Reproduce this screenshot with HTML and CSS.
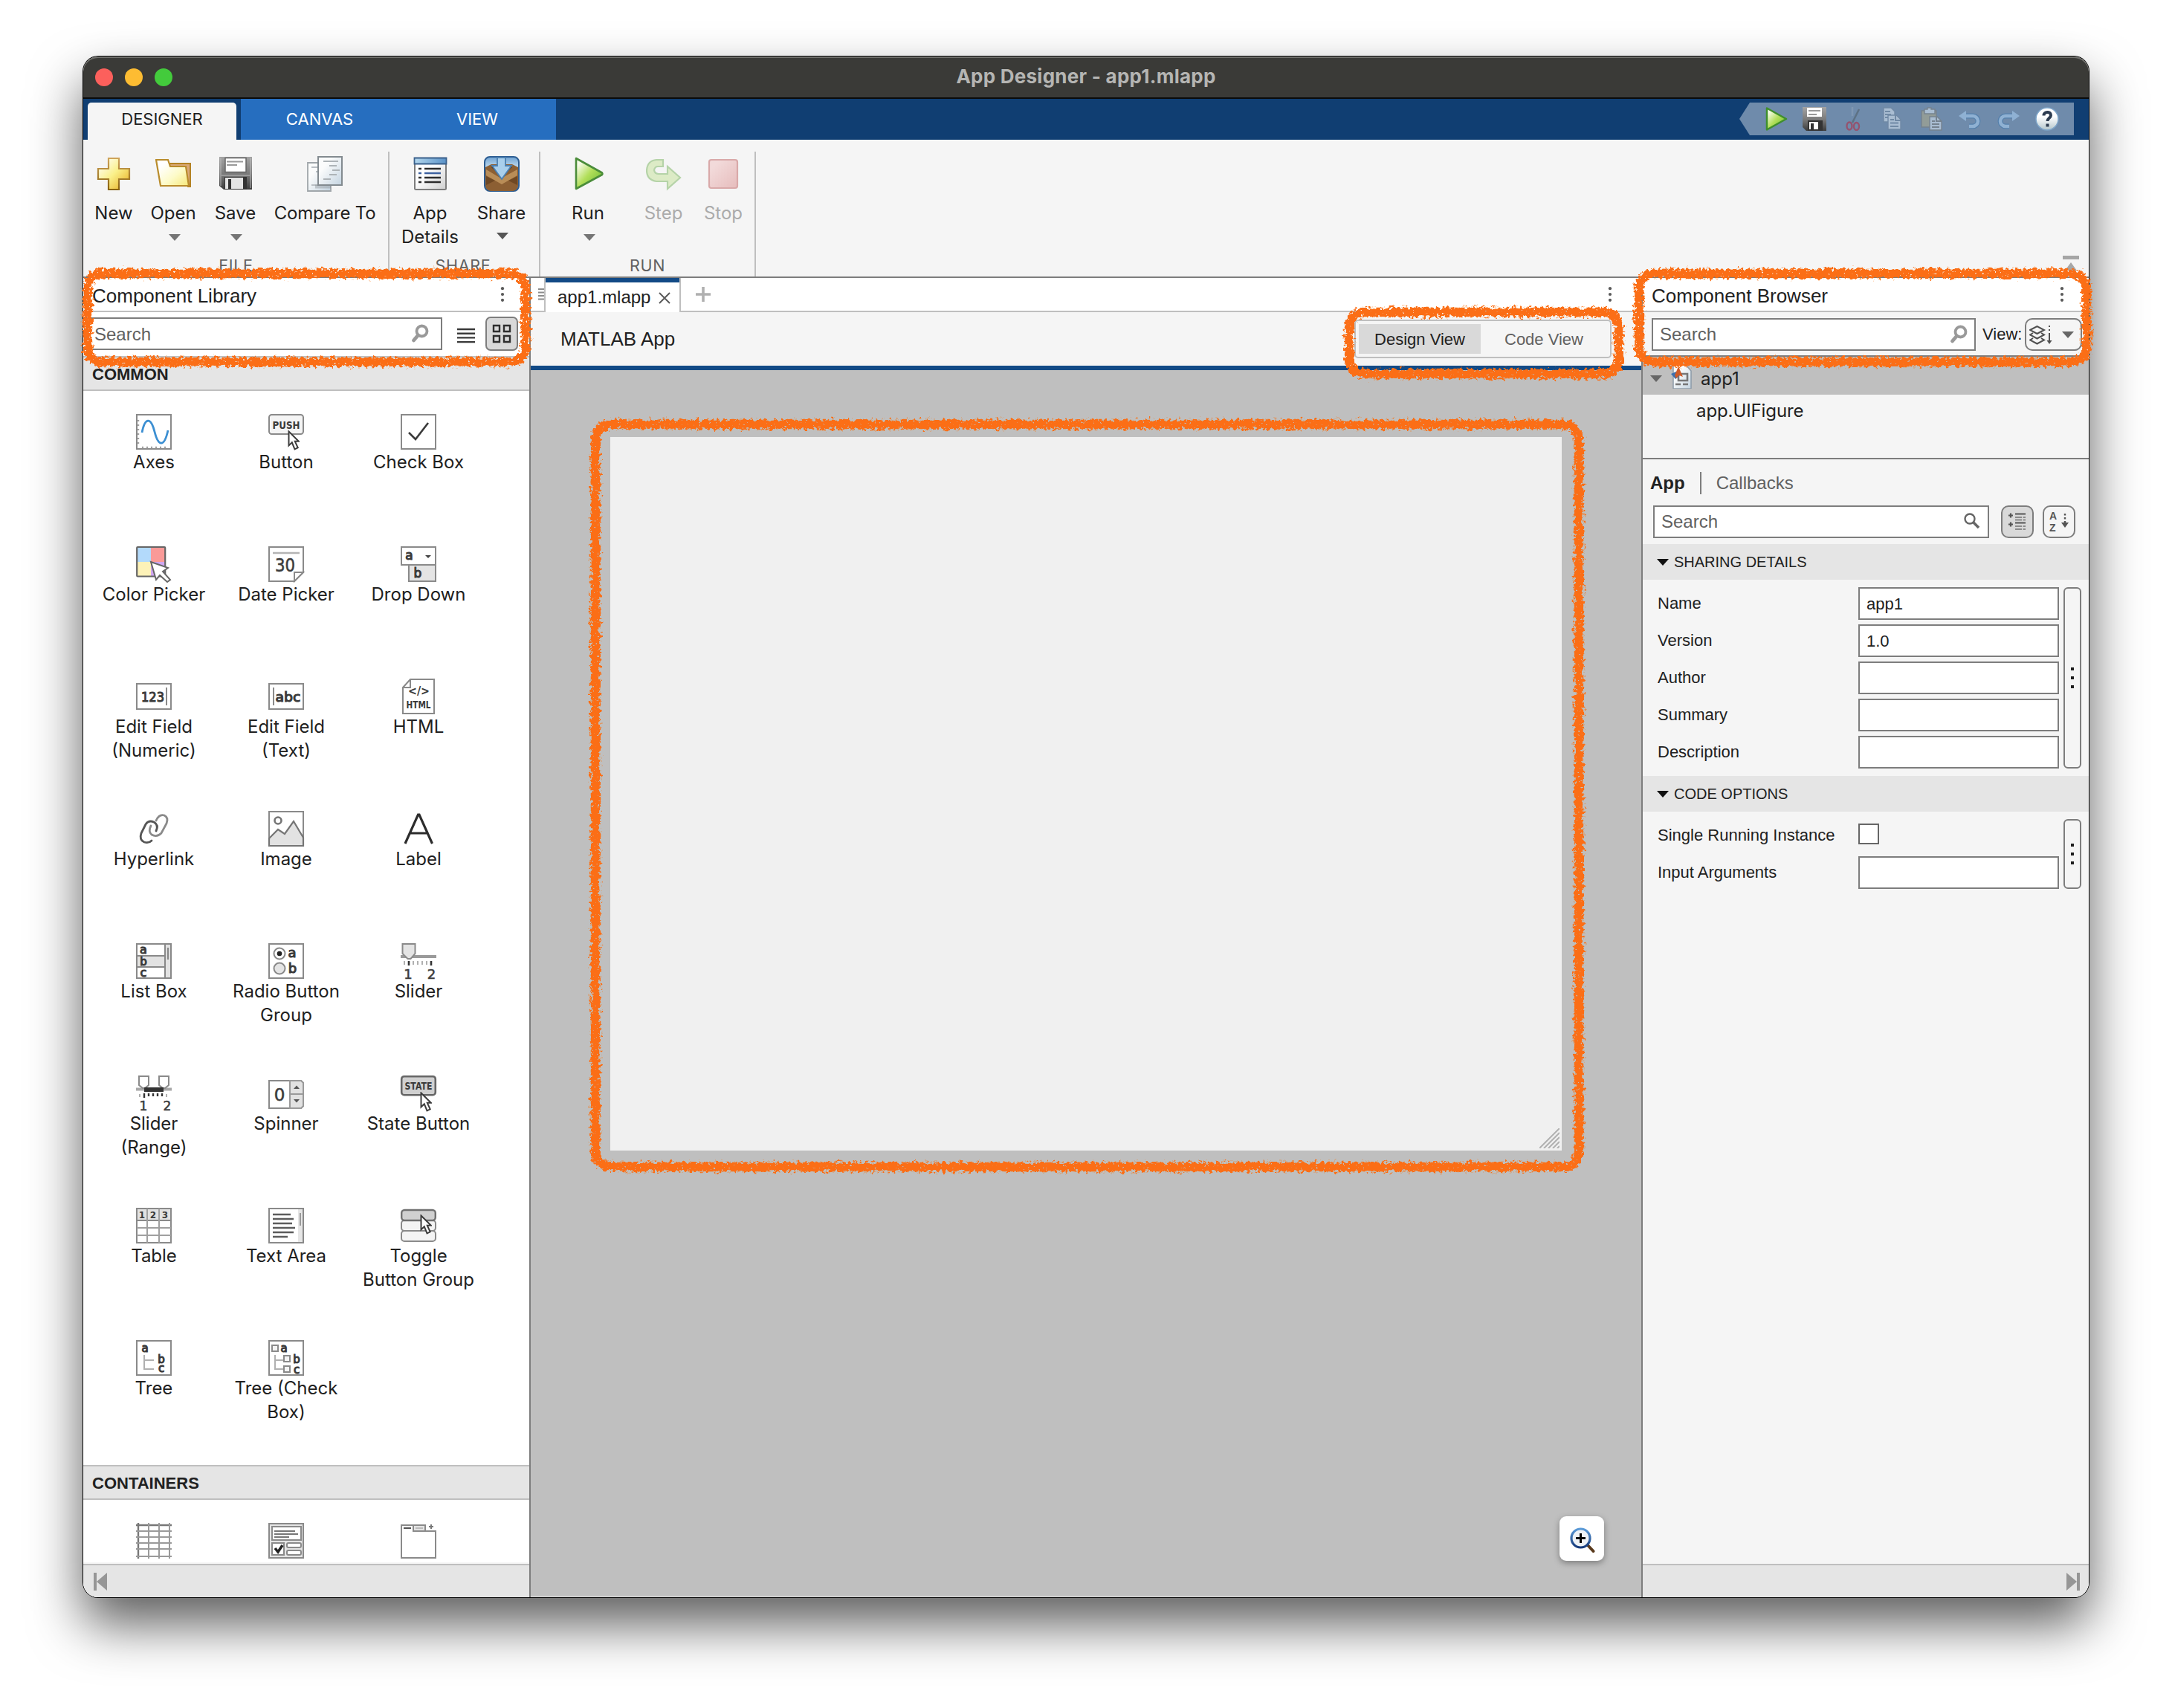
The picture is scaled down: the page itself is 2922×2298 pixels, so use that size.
FILE: index.html
```html
<!DOCTYPE html>
<html lang="en">
<head>
<meta charset="utf-8">
<title>App Designer - app1.mlapp</title>
<link rel="stylesheet" href="styles.css">
</head>
<body>
<svg class="defs" width="0" height="0" aria-hidden="true">
  <defs>
    <linearGradient id="gold" x1="0" y1="0" x2="1" y2="1"><stop offset=".1" stop-color="#fffef2"/><stop offset=".5" stop-color="#faf08a"/><stop offset="1" stop-color="#e6a817"/></linearGradient>
    <linearGradient id="goldEdge" x1="0" y1="0" x2="0" y2="1"><stop offset="0" stop-color="#cfa45a"/><stop offset="1" stop-color="#8a6410"/></linearGradient>
    <linearGradient id="folder" x1="0" y1="0" x2="1" y2="1"><stop offset=".2" stop-color="#fff"/><stop offset=".6" stop-color="#fdfbc8"/><stop offset="1" stop-color="#f6e878"/></linearGradient>
    <linearGradient id="steel" x1="0" y1="0" x2="0" y2="1"><stop offset="0" stop-color="#a4a4a4"/><stop offset=".5" stop-color="#7c7c7c"/><stop offset="1" stop-color="#3c3c3c"/></linearGradient>
    <linearGradient id="paper" x1="0" y1="0" x2="1" y2="1"><stop offset=".3" stop-color="#fbfcfc"/><stop offset="1" stop-color="#c3d3e0"/></linearGradient>
    <linearGradient id="sheet" x1="0" y1="0" x2="1" y2="1"><stop offset=".4" stop-color="#fff"/><stop offset="1" stop-color="#cfcfcf"/></linearGradient>
    <linearGradient id="bluebar" x1="0" y1="0" x2="1" y2="0"><stop offset="0" stop-color="#b4d8ee"/><stop offset="1" stop-color="#5a92c8"/></linearGradient>
    <linearGradient id="green" x1="0" y1="0" x2="1" y2="1"><stop offset=".15" stop-color="#f6fbe8"/><stop offset=".5" stop-color="#b2df5a"/><stop offset="1" stop-color="#5fb52a"/></linearGradient>
    <linearGradient id="sky" x1="0" y1="0" x2="0" y2="1"><stop offset="0" stop-color="#6ea2d2"/><stop offset=".4" stop-color="#d8ebf7"/><stop offset="1" stop-color="#3f78b4"/></linearGradient>
    <linearGradient id="pink" x1="0" y1="0" x2="1" y2="1"><stop offset=".2" stop-color="#f2dada"/><stop offset="1" stop-color="#e6bcbc"/></linearGradient>
    <linearGradient id="ball" x1="0" y1="0" x2="0" y2="1"><stop offset=".4" stop-color="#fff"/><stop offset="1" stop-color="#b4c6cc"/></linearGradient>
    <linearGradient id="lens" x1="0" y1="0" x2="0" y2="1"><stop offset="0" stop-color="#5b9bd8"/><stop offset="1" stop-color="#15397a"/></linearGradient>
    <filter id="chalk" filterUnits="userSpaceOnUse" x="90" y="340" width="2750" height="1260">
      <feTurbulence type="fractalNoise" baseFrequency=".22" numOctaves="3" seed="4" result="grain"/>
      <feDisplacementMap in="SourceGraphic" in2="grain" scale="12" xChannelSelector="R" yChannelSelector="G" result="rough"/>
      <feTurbulence type="fractalNoise" baseFrequency=".3 .34" numOctaves="2" seed="11"/>
      <feColorMatrix values="0 0 0 0 0  0 0 0 0 0  0 0 0 0 0  0 10 0 0 -2" result="holes"/>
      <feComposite in="rough" in2="holes" operator="in"/>
    </filter>
    <symbol id="cursor" viewBox="0 0 16 27"><path d="M1.5 1.5v19l4.3-4.2 3.7 9 4.2-2-3.9-8.5h5z" fill="#fff" stroke="#3c3c3c" stroke-width="2"/></symbol>
    <symbol id="kebab" viewBox="0 0 6 20"><circle cx="3" cy="2.2" r="2.1"/><circle cx="3" cy="10" r="2.1"/><circle cx="3" cy="17.8" r="2.1"/></symbol>
    <symbol id="loupe" viewBox="0 0 26 26"><circle cx="15.5" cy="9.5" r="7" fill="#fff" stroke="#999" stroke-width="3.800"/><path d="M10 15.500 4.500 22" stroke="#999" stroke-width="4.800" stroke-linecap="round"/></symbol>
  </defs>
</svg>

<div class="window">
  <header class="titlebar">
    <div class="lights"><i class="red"></i><i class="amber"></i><i class="lime"></i></div>
    <h1>App Designer - app1.mlapp</h1>
  </header>

  <nav class="tabstrip">
    <div class="tab selected">DESIGNER</div>
    <div class="tabgroup"><div class="tab">CANVAS</div><div class="tab">VIEW</div></div>
    <div class="quickbar">
      <svg class="q1" viewBox="0 0 32 32"><path d="M4 1.500 30 16 4 30.500z" fill="url(#green)" stroke="#3f8f2c" stroke-width="2.500" stroke-linejoin="round"/></svg>
      <svg class="q2" viewBox="0 0 32 32"><path d="M0 0h32v32H5l-5-5z" fill="url(#steel)"/><path d="M6 1h20v12H6z" fill="#fff"/><path d="M8 5h16M8 10h11" stroke="#999" stroke-width="2"/><path d="M7 18h20v14H7z" fill="#333"/><path d="M9 20h12v10H9z" fill="#fff"/><path d="M11 22h4v9h-4z" fill="#333"/></svg>
      <svg class="q3" viewBox="0 0 32 32" fill="none"><path d="M15 21 24 3" stroke="#5d7184" stroke-width="2.500"/><path d="M15 0v12" stroke="#7f97b2" stroke-width="2.500"/><ellipse cx="11" cy="25.500" rx="3.500" ry="5" stroke="#94536f" stroke-width="2.400"/><ellipse cx="20.500" cy="26" rx="3.500" ry="5" stroke="#94536f" stroke-width="2.400"/></svg>
      <svg class="q4" viewBox="0 0 32 32" fill="#a9bdd2" stroke="#7089a5" stroke-width="1.400"><path d="M5 1h10l5 5v14H5z"/><path d="M7 6h7M7 10h8M7 14h5" stroke-width="2"/><path d="M11 11h11l6 6v13H11z"/><path d="M21 11v7h7M14 17h5M14 21.500h11M14 26h11" stroke-width="2"/></svg>
      <svg class="q5" viewBox="0 0 32 32" stroke="#75828f" stroke-width="1.400"><path d="M3 5h20v22H3z" fill="#929c98"/><path d="M7 3h4V1h5v2h5v6H7z" fill="#a9bdd2"/><path d="M14 13h10l6 6v12H14z" fill="#a9bdd2"/><path d="M23 13v6h7M17 19h4M17 23h10M17 27h10" fill="none" stroke-width="2"/></svg>
      <svg class="q6" viewBox="0 0 32 32" fill="none"><path d="M7 12h13a6.500 6.500 0 0 1 0 14h-5" stroke="#5580ac" stroke-width="7"/><path d="M1 12l10-7v14z" fill="#8fb1d3"/><path d="M7 12h13a6.500 6.500 0 0 1 0 14h-5" stroke="#8fb1d3" stroke-width="4.500"/></svg>
      <svg class="q7" viewBox="0 0 32 32" fill="none"><path d="M25 12H12a6.500 6.500 0 0 0 0 14h5" stroke="#5580ac" stroke-width="7"/><path d="M31 12l-10-7v14z" fill="#8fb1d3"/><path d="M25 12H12a6.500 6.500 0 0 0 0 14h5" stroke="#8fb1d3" stroke-width="4.500"/></svg>
      <svg class="q8" viewBox="0 0 32 32"><circle cx="16" cy="16" r="15" fill="url(#ball)" stroke="#7da4c8" stroke-width="1.500"/><path d="M11.500 11.500c0-6 9.500-6 9.500-.5 0 4-4.500 3.500-4.500 8M16.500 22.500v4" fill="none" stroke="#2d3c50" stroke-width="4"/></svg>
    </div>
  </nav>

  <section class="ribbon">
    <div class="group file">
      <div class="tools">
        <div class="tool new"><svg viewBox="0 0 48 48"><path d="M17 3h14v14h14v14H31v14H17V31H3V17h14z" fill="url(#gold)" stroke="url(#goldEdge)" stroke-width="2.200"/></svg><span>New</span></div>
        <div class="tool open"><svg viewBox="0 0 48 48"><path d="M18 10h29v31H44L38 15H18z" fill="#d9a877" stroke="#b48224" stroke-width="2"/><path d="M1 5h16l3 9h21l4 26H7z" fill="url(#folder)" stroke="#b98c2c" stroke-width="2.200"/></svg><span>Open</span><b class="arrow"></b></div>
        <div class="tool save"><svg viewBox="0 0 48 48"><path d="M2 1h44v44H8l-6-5z" fill="url(#steel)"/><path d="M4 3v37M44 3v40" stroke="#c4c4c4" stroke-width="1.500" opacity=".6"/><path d="M10 2.500h28v19H10z" fill="#fff" stroke="#666" stroke-width="1.500"/><path d="M12 7.500h22M12 12h14" stroke="#9a9a9a" stroke-width="2.200"/><path d="M4 26h40" stroke="#999" stroke-width="2"/><path d="M9 28h30v17H9z" fill="#333"/><path d="M10 29h24v15H10z" fill="#e4e4e4"/><path d="M14 31h4v13h-4z" fill="#333"/></svg><span>Save</span><b class="arrow"></b></div>
        <div class="tool compare"><svg viewBox="0 0 48 48"><path d="M1 9h31v38H1z" fill="url(#paper)" stroke="#a0a6aa" stroke-width="1.800"/><path d="M6 15h8M12 21h3M6 39h14" stroke="#b9bfc4" stroke-width="2"/><path d="M11 41h21" stroke="#7a8288" stroke-width="5" opacity=".35"/><path d="M15 1h32v38H15z" fill="url(#paper)" stroke="#838b90" stroke-width="2"/><path d="M22 7h20M30 13h10M34 19h10M30 25h10M22 31h10" stroke="#adb3b7" stroke-width="2.200"/></svg><span>Compare To</span></div>
      </div>
      <h2>FILE</h2>
    </div>
    <div class="group share">
      <div class="tools">
        <div class="tool details"><svg viewBox="0 0 48 48"><rect x="3" y="3" width="42" height="42" rx="1.500" fill="url(#sheet)" stroke="#7d7d7d" stroke-width="2"/><path d="M2.500 2.500h43v8h-43z" fill="url(#bluebar)" stroke="#3b618c" stroke-width="1.800"/><path d="M8 17h4M16 17h22M8 29h4M16 29h22M8 35h4M16 35h22" stroke="#2c2c2c" stroke-width="2.600"/><path d="M8 23h4M16 23h22" stroke="#3e62a0" stroke-width="2.600"/></svg><span>App<br>Details</span></div>
        <div class="tool sharing"><svg viewBox="0 0 48 48"><rect x="1" y="1" width="46" height="46" rx="7" fill="url(#sky)" stroke="#2d5d92" stroke-width="2"/><path d="M2 15l8-4h28l8 4v25q-1 6-7 7H9q-6-1-7-7z" fill="#8c5f33"/><path d="M3 18l20 12L45 18v8L24 38 3 26z" fill="#b98d57"/><path d="M10 15l14 13 14-13-4-2H14z" fill="#54351a"/><path d="M3 27l12 6-12 6zM45 27l-12 6 12 6z" fill="#6f4823"/><path d="M18 2h11v11h8L24 31 11 13h7z" fill="#a9cfec" stroke="#4b7fb0" stroke-width="1.800"/></svg><span>Share</span><b class="arrow dark"></b></div>
      </div>
      <h2>SHARE</h2>
    </div>
    <div class="group run">
      <div class="tools">
        <div class="tool go"><svg viewBox="0 0 48 48"><path d="M8 3 43 22.500Q44 24 43 25L8 44z" fill="url(#green)" stroke="#4b8d3a" stroke-width="2.600" stroke-linejoin="round"/></svg><span>Run</span><b class="arrow"></b></div>
        <div class="tool step off"><svg viewBox="0 0 48 48"><path d="M23 5v9h-7q-4 0-5 5 1 5 6 5h12V14l17 15-17 15V34H14Q1 32 1 19 2 6 14 5z" fill="#dcebc6" stroke="#b5d3a8" stroke-width="2.200"/></svg><span>Step</span></div>
        <div class="tool stop off"><svg viewBox="0 0 48 48"><rect x="5" y="5" width="38" height="38" rx="3" fill="url(#pink)" stroke="#d9a9a9" stroke-width="2.200"/></svg><span>Stop</span></div>
      </div>
      <h2>RUN</h2>
    </div>
    <svg class="collapse" viewBox="0 0 22 20"><path d="M0 0h22v5H0zM3 20 11 9l8 11z" fill="#a6a6a6"/></svg>
  </section>

  <main class="dock">
    <aside class="library">
      <div class="panelhead"><h3>Component Library</h3><svg class="kebab"><use href="#kebab"/></svg></div>
      <div class="libsearch">
        <div class="input">Search<svg class="loupe"><use href="#loupe"/></svg></div>
        <svg class="listbtn" viewBox="0 0 24 22"><path d="M0 2h24M0 7.700h24M0 13.400h24M0 19.100h24" stroke="#3a3a3a" stroke-width="2.400"/></svg>
        <div class="gridbtn"><svg viewBox="0 0 26 26"><path d="M2 2h8v8H2zM16 2h8v8h-8zM2 16h8v8H2zM16 16h8v8h-8z" fill="none" stroke="#2e2e2e" stroke-width="2.400"/></svg></div>
      </div>
      <h4 class="cat">COMMON</h4>
      <div class="grid">
        <div class="comp"><svg viewBox="0 0 48 48"><rect class="bx" x="1" y="1" width="46" height="46"/><path d="M3 8v36M8 45h34" stroke="#a0a0a0" stroke-width="2.400" stroke-dasharray="2 4"/><path d="M8 25C12 4 20 4 25 24S38 45 43 22" fill="none" stroke="#3c8fd2" stroke-width="2.800"/></svg>Axes</div>
        <div class="comp"><svg viewBox="0 0 48 48"><rect class="bx sh" x="1" y="1" width="46" height="26" rx="3.500"/><text class="pix" x="24" y="19.500" font-size="14" textLength="37" lengthAdjust="spacingAndGlyphs">PUSH</text><use href="#cursor" x="26" y="22" width="16" height="27"/></svg>Button</div>
        <div class="comp"><svg viewBox="0 0 48 48"><rect class="bx" x="1" y="1" width="46" height="46"/><path d="M11 25l9 9 17-22" fill="none" stroke="#3a3a3a" stroke-width="2.600"/></svg>Check Box</div>

        <div class="comp"><svg viewBox="0 0 48 48"><path d="M1 1h19v20H1z" fill="#b3dafb"/><path d="M20 1h19v20H20z" fill="#fa9a98"/><path d="M1 21h19v20H1z" fill="#fdf2b8"/><path d="M20 21h19v20H20z" fill="#cfa6f0"/><rect x="1.200" y="1" width="38" height="39.500" rx="1" fill="none" stroke="#666" stroke-width="2.200"/><path d="M20 21l23 8-7 5 10 11-4 3-10-9-5 6z" fill="#fff" stroke="#666" stroke-width="2"/></svg>Color Picker</div>
        <div class="comp"><svg viewBox="0 0 48 48"><path class="bx" d="M1 1h46v34L35 47H1z"/><path d="M6 9h36" stroke="#b4b4b4" stroke-width="2.400"/><text class="pix lt" x="22.500" y="34" font-size="24" textLength="27" lengthAdjust="spacingAndGlyphs">30</text><path class="bx" d="M35 47V35h12z"/></svg>Date Picker</div>
        <div class="comp"><svg viewBox="0 0 48 48"><rect class="bx sh2" x="11" y="25" width="36" height="22"/><rect class="bx" x="1" y="1" width="46" height="24"/><text class="pix md" x="11.500" y="18" font-size="17">a</text><text class="pix md" x="23" y="42" font-size="17">b</text><path d="M33 12h8l-4 4z" fill="#444"/></svg>Drop Down</div>

        <div class="comp"><svg viewBox="0 0 48 48"><rect class="bx" x="1" y="7" width="46" height="34"/><text class="pix md" x="22.500" y="30.500" font-size="18" textLength="31" lengthAdjust="spacingAndGlyphs">123</text><path d="M41 12v24" stroke="#8a8a8a" stroke-width="2"/></svg>Edit Field<br>(Numeric)</div>
        <div class="comp"><svg viewBox="0 0 48 48"><rect class="bx" x="1" y="7" width="46" height="34"/><text class="pix md" x="26.500" y="30.500" font-size="18" textLength="34" lengthAdjust="spacingAndGlyphs">abc</text><path d="M7 12v24" stroke="#8a8a8a" stroke-width="2"/></svg>Edit Field<br>(Text)</div>
        <div class="comp"><svg viewBox="0 0 48 48"><path class="bx" d="M13 1h32v46H3V12zM13 1v11H3"/><text class="pix" x="24.500" y="22" font-size="15" textLength="29" lengthAdjust="spacingAndGlyphs">&lt;/&gt;</text><text class="pix" x="24" y="40" font-size="14" textLength="33" lengthAdjust="spacingAndGlyphs">HTML</text></svg>HTML</div>

        <div class="comp"><svg viewBox="0 0 48 48" fill="none" stroke-width="2.800" stroke-linecap="round"><path d="M27 13Q31 4 38 6 44 9 41 17L34 30Q28 36 21 32 16 28 20 20" stroke="#8a8a8a"/><path d="M21 40Q17 44 11 42 4 39 7 30L13 18Q17 12 24 15 31 19 27 27" stroke="#555"/></svg>Hyperlink</div>
        <div class="comp"><svg viewBox="0 0 48 48"><rect class="bx" x="1" y="1" width="46" height="46"/><path d="M1 37l12-12 9 6L34 14l13 22v11H1z" fill="#e2e2e2" stroke="#757575" stroke-width="2.200"/><circle cx="13" cy="13" r="4.500" fill="none" stroke="#757575" stroke-width="2.600"/></svg>Image</div>
        <div class="comp"><svg viewBox="0 0 48 48"><path d="M6 44 23.500 5h1.500L42.500 44M12.500 30h23" fill="none" stroke="#2c2c2c" stroke-width="3.200"/></svg>Label</div>

        <div class="comp"><svg viewBox="0 0 48 48"><rect class="bx" x="1" y="1" width="46" height="46"/><path d="M1 17h38v15H1zM39 1h8v46h-8z" fill="#e2e2e2" stroke="#888" stroke-width="2"/><path d="M43 6v16" stroke="#888" stroke-width="2.200"/><text class="pix md" x="10" y="14" font-size="16">a</text><text class="pix md" x="10" y="30" font-size="15">b</text><text class="pix md" x="10" y="44.500" font-size="16">c</text></svg>List Box</div>
        <div class="comp"><svg viewBox="0 0 48 48"><rect class="bx" x="1" y="1" width="46" height="46"/><circle class="bx" cx="15" cy="14" r="7.500"/><circle cx="15" cy="14" r="3.300" fill="#222"/><circle class="bx sh2" cx="15" cy="34" r="7.500"/><text class="pix md" x="32" y="18.500" font-size="18">a</text><text class="pix md" x="32.500" y="40" font-size="18">b</text></svg>Radio Button<br>Group</div>
        <div class="comp"><svg viewBox="0 0 48 48"><path d="M0 18h48" stroke="#9a9a9a" stroke-width="4"/><path class="bx sh2" d="M2.500 1h17v13l-6 7h-4l-7-7z"/><path d="M5 24v5M17 24v5M23 24v5M29 24v5M35 24v5" stroke="#b0b0b0" stroke-width="2"/><path d="M11 24v6M41 24v6" stroke="#333" stroke-width="2.600"/><text class="pix lt" x="10" y="48" font-size="18">1</text><text class="pix lt" x="41.500" y="48" font-size="18">2</text></svg>Slider</div>

        <div class="comp"><svg viewBox="0 0 48 48"><path d="M0 18.500h48" stroke="#a8a8a8" stroke-width="4"/><path class="bx" d="M4 1h13v12l-5 4H9l-5-4zM31 1h13v12l-5 4h-3l-5-4z"/><path d="M11 19h26" stroke="#333" stroke-width="6"/><path d="M5 25v4M41 25v4" stroke="#b0b0b0" stroke-width="2"/><path d="M11 24v6M17 24v4M23 24v4M29 24v4M35 24v4" stroke="#333" stroke-width="2.400"/><text class="pix lt" x="10" y="47" font-size="17">1</text><text class="pix lt" x="42" y="47" font-size="17">2</text></svg>Slider<br>(Range)</div>
        <div class="comp"><svg viewBox="0 0 48 48"><path class="bx" d="M1 7h43l3 3v31l-3 3H1z"/><path d="M29 7h15l3 3v31l-3 3H29zM29 25h18" fill="#e2e2e2" stroke="#9a9a9a" stroke-width="2"/><text class="pix lt" x="15" y="34" font-size="23">0</text><path d="M34 18h8l-4-4.500zM34 32h8l-4 4.500z" fill="#555"/></svg>Spinner</div>
        <div class="comp"><svg viewBox="0 0 48 48"><rect x="1.200" y="1.200" width="45.600" height="25" rx="3.500" fill="#d0d0d0" stroke="#666" stroke-width="2.600"/><text class="pix" x="24" y="19" font-size="13.500" textLength="37" lengthAdjust="spacingAndGlyphs">STATE</text><use href="#cursor" x="26" y="22" width="16" height="27"/></svg>State Button</div>

        <div class="comp"><svg viewBox="0 0 48 48"><rect class="bx" x="1" y="1" width="46" height="46"/><path d="M1 1h46v16H1z" fill="#e2e2e2" stroke="#8a8a8a" stroke-width="2"/><path d="M15 1v46M31 1v46M1 27h46M1 37h46" stroke="#a0a0a0" stroke-width="2"/><text class="pix" x="8" y="13.500" font-size="12">1</text><text class="pix" x="23" y="13.500" font-size="12">2</text><text class="pix" x="39" y="13.500" font-size="12">3</text></svg>Table</div>
        <div class="comp"><svg viewBox="0 0 48 48"><rect class="bx" x="1" y="1" width="46" height="46"/><path d="M40 2h6v44h-6z" fill="#e6e6e6"/><path d="M43 7v17" stroke="#999" stroke-width="2"/><path d="M6 9h24M6 15h28M6 21h26M6 27h30M6 33h28M6 39h20" stroke="#5c5c5c" stroke-width="2.400"/></svg>Text Area</div>
        <div class="comp"><svg viewBox="0 0 48 48"><rect class="bx sh" x="1" y="31" width="46" height="14" rx="4"/><rect class="bx sh" x="1" y="17" width="46" height="14" rx="4"/><rect x="1.200" y="3" width="45.600" height="14" rx="4" fill="#d0d0d0" stroke="#707070" stroke-width="2.400"/><use href="#cursor" x="26" y="9" width="16" height="27"/></svg>Toggle<br>Button Group</div>

        <div class="comp"><svg viewBox="0 0 48 48"><rect class="bx" x="1" y="1" width="46" height="46"/><text class="pix md" x="12" y="15.500" font-size="15">a</text><text class="pix md" x="34" y="30.500" font-size="15">b</text><text class="pix md" x="34" y="43" font-size="15">c</text><path d="M11 20v19h13M11 27h13" fill="none" stroke="#b0b0b0" stroke-width="2"/></svg>Tree</div>
        <div class="comp"><svg viewBox="0 0 48 48"><rect class="bx" x="1" y="1" width="46" height="46"/><text class="pix md" x="21" y="15.500" font-size="15">a</text><text class="pix md" x="38" y="30.500" font-size="15">b</text><text class="pix md" x="38" y="44.500" font-size="15">c</text><path d="M9 20v19h11M9 27h11" fill="none" stroke="#b0b0b0" stroke-width="2"/><path class="bx sh" d="M5 7h8v8H5zM21 21h8v8h-8zM21 35h8v8h-8z"/></svg>Tree (Check<br>Box)</div>
      </div>
      <h4 class="cat">CONTAINERS</h4>
      <div class="grid cut">
        <div class="comp"><svg viewBox="0 0 48 48"><path d="M0 3h48M3 0v48" stroke="#777" stroke-width="2.400"/><path d="M0 11h48M0 19h48M0 27h48M0 35h48M0 45h48M17 0v48M31 0v48M45 0v48" stroke="#9a9a9a" stroke-width="2"/></svg></div>
        <div class="comp"><svg viewBox="0 0 48 48"><rect class="bx sh2" x="1" y="1" width="46" height="46"/><path class="bx" d="M5 5h39v18H5zM5 27h16v16H5z"/><path d="M8 11h28M8 15h32M8 19h20" stroke="#777" stroke-width="2"/><rect class="bx" x="25" y="27" width="19" height="6" rx="2"/><rect class="bx" x="25" y="37" width="19" height="6" rx="2"/><path d="M9 34l4 5 6-9" fill="none" stroke="#222" stroke-width="3.600"/></svg></div>
        <div class="comp"><svg viewBox="0 0 48 48"><path class="bx" d="M1 3h16v8h30v36H1z"/><path class="bx sh2" d="M17 3h16v8H17z"/><path d="M4 7h10" stroke="#555" stroke-width="2.200"/><path d="M20 7h10" stroke="#bbb" stroke-width="2"/><path d="M38 5h6M41 2v6" stroke="#777" stroke-width="2"/></svg></div>
      </div>
      <div class="foot"><svg viewBox="0 0 18 24"><path d="M0 0h4v24H0zM4 12 18 0v24z" fill="#969696"/></svg></div>
    </aside>

    <section class="center">
      <div class="doctabs">
        <div class="grip"><svg viewBox="0 0 8 16"><path d="M0 1h8M0 5.500h8M0 10h8M0 14.500h8" stroke="#8c8c8c" stroke-width="1.800"/></svg></div>
        <div class="doctab">app1.mlapp<svg viewBox="0 0 16 16"><path d="M1 1l14 14M15 1 1 15" stroke="#5c5c5c" stroke-width="2"/></svg></div>
        <div class="rest"><svg class="plus" viewBox="0 0 20 20"><path d="M0 10h20M10 0v20" stroke="#b0b0b0" stroke-width="3.600"/></svg><svg class="kebab"><use href="#kebab"/></svg></div>
      </div>
      <div class="viewbar"><span>MATLAB App</span><div class="toggle"><b>Design View</b><b>Code View</b></div></div>
      <div class="stage">
        <div class="figure"><svg viewBox="0 0 27 27"><path d="M0 27 27 0M6 27 27 6M12 27 27 12M18 27l9-9M24 27l3-3" stroke="#b0b0b0" stroke-width="2"/></svg></div>
        <div class="zoombtn"><svg viewBox="0 0 34 34"><path d="M24 24l7.500 8" stroke="#5a3a1c" stroke-width="4" stroke-linecap="round"/><circle cx="14.500" cy="14.500" r="12.500" fill="#eef2f6" stroke="url(#lens)" stroke-width="3.200"/><path d="M8 14.500h13M14.500 8v13" stroke="#000" stroke-width="3"/></svg></div>
      </div>
    </section>

    <aside class="browser">
      <div class="panelhead"><h3>Component Browser</h3><svg class="kebab"><use href="#kebab"/></svg></div>
      <div class="bsearch">
        <div class="input">Search<svg class="loupe"><use href="#loupe"/></svg></div>
        <span>View:</span>
        <div class="viewbtn"><svg class="stack" viewBox="0 0 32 26" fill="none" stroke="#505050" stroke-width="2"><path d="M1 6l9.500-5L20 6l-9.500 5zM5 10l-4 2.500 9.500 5 9.500-5L16 10M5 17l-4 2.500 9.500 5 9.500-5L16 17"/><path d="M27 0v2M27 5v2M27 10v12"/><path d="M23.500 20h7L27 25z" fill="#505050" stroke="none"/></svg><i class="tri"></i></div>
      </div>
      <div class="tree">
        <div class="node on"><i class="tri"></i><svg viewBox="0 0 28 32"><path d="M3 0h17l7 8v24H3z" fill="url(#paper)" stroke="#8c9aa8" stroke-width="1.500"/><path d="M10 12h12v9H10zM6 26h7M16 26h7" fill="none" stroke="#777" stroke-width="2.600"/><path d="M0 12l7-3 5 5-6 5z" fill="#3c6fae"/><path d="M5 14 10 2l6 14-5-2-4 4z" fill="#cf5a26"/></svg>app1</div>
        <div class="node kid">app.UIFigure</div>
      </div>
      <div class="ptabs"><b>App</b><span>Callbacks</span></div>
      <div class="psearch">
        <div class="input">Search<svg viewBox="0 0 22 22"><circle cx="8" cy="8" r="6.500" fill="#fff" stroke="#666" stroke-width="2.400"/><path d="M13 13l7 7" stroke="#666" stroke-width="3.600"/></svg></div>
        <div class="sq on"><svg viewBox="0 0 24 26"><path d="M0 4.500h6M3 1.500v6M0 16.500h6M3 13.500v6M9 2.500h14M9 14.500h14" stroke="#555" stroke-width="2.200"/><path d="M9 7h14M9 10.500h14M9 19h14M9 23h14" stroke="#8a8a8a" stroke-width="2" stroke-dasharray="9 1.500"/></svg></div>
        <div class="sq sort"><div class="az"><span>A</span><span>Z</span></div><svg viewBox="0 0 10 20"><path d="M5 0v2.500M5 5v2.500M5 10v4" stroke="#555" stroke-width="2.400"/><path d="M0 12h10l-5 7z" fill="#555"/></svg></div>
      </div>
      <h5><i class="tri"></i>SHARING DETAILS</h5>
      <div class="props">
        <dl><dt>Name</dt><dd>app1</dd><dt>Version</dt><dd>1.0</dd><dt>Author</dt><dd></dd><dt>Summary</dt><dd></dd><dt>Description</dt><dd></dd></dl>
        <div class="more"><i></i><i></i><i></i></div>
      </div>
      <h5><i class="tri"></i>CODE OPTIONS</h5>
      <div class="props">
        <dl><dt>Single Running Instance</dt><dd class="check"></dd><dt>Input Arguments</dt><dd></dd></dl>
        <div class="more"><i></i><i></i><i></i></div>
      </div>
      <div class="foot"><svg viewBox="0 0 18 24"><path d="M14 0h4v24h-4zM14 12 0 0v24z" fill="#969696"/></svg></div>
    </aside>
  </main>
</div>

<svg class="marks" viewBox="0 0 2922 2298" fill="none" stroke="#fb6e14" stroke-width="12.500">
  <g filter="url(#chalk)">
    <rect x="118" y="368" width="589" height="119" rx="20"/>
    <rect x="2205" y="368" width="602" height="119" rx="20"/>
    <rect x="1815" y="420" width="363" height="83" rx="20"/>
    <rect x="801" y="571" width="1323" height="999" rx="20"/>
  </g>
</svg>
</body>
</html>
```
FILE: styles.css
```css
* { box-sizing: border-box; margin: 0; padding: 0; }
html { background: #fff; }
body {
  width: 2922px; height: 2298px; overflow: hidden; padding: 76px 112px 0;
  font: 24px/32px Inter, "Liberation Sans", sans-serif; color: #212121; background: #fff;
}
h1, h2, h3, h4, h5 { font-weight: 400; }
svg { display: block; flex: none; }
.defs { position: absolute; }
.marks { position: absolute; left: 0; top: 0; width: 2922px; height: 2298px; pointer-events: none; }

.window {
  height: 2073px; display: flex; flex-direction: column; border-radius: 20px; overflow: hidden;
  background: #f5f5f5; box-shadow: 0 0 0 1px #000, 0 36px 70px rgba(0, 0, 0, .64);
}

/* title bar */
.titlebar {
  height: 57px; flex: none; display: grid; grid-template-columns: 400px 1fr 400px; align-items: center;
  background: #3a3a37; border-bottom: 2px solid #0b0b0b; box-shadow: inset 0 2px #6f6f6b; border-radius: 20px 20px 0 0;
}
.titlebar h1 { font: bold 26px/51px Inter, sans-serif; letter-spacing: .25px; color: #b5b5b3; text-align: center; height: 54px; }
.lights { display: flex; gap: 16px; padding-left: 16px; }
.lights i { width: 24px; height: 24px; border-radius: 50%; margin-top: 1px; }
.red { background: #fc605c; } .amber { background: #fdbc32; } .lime { background: #43cb3c; }

/* tool strip tabs */
.tabstrip { height: 55px; flex: none; display: flex; background: #103e72; padding: 0 20px 0 6px; font-size: 22px; line-height: 55px; }
.tab { width: 212px; text-align: center; color: #fff; }
.tab.selected { width: 200px; height: 50px; margin-top: 5px; line-height: 44px; background: #f5f5f5; color: #212121; border-radius: 5px 5px 0 0; }
.tabgroup { display: flex; background: #266ebf; margin-left: 6px; line-height: 54px; }
.quickbar {
  width: 450px; height: 44px; margin: 5px 0 0 auto; padding: 6px 20px 0 33px; display: flex; justify-content: space-between;
  background: #6f8bab; clip-path: polygon(0 50%, 14px 0, 100% 0, 100% 100%, 14px 100%);
}
.quickbar svg { width: 32px; height: 32px; }

/* ribbon */
.ribbon { height: 186px; flex: none; display: flex; border-bottom: 2px solid #7d7d7d; }
.group { display: flex; flex-direction: column; margin-top: 16px; border-right: 2px solid #bfbfbf; }
.group h2 { height: 29px; font-size: 21.5px; line-height: 29px; letter-spacing: .7px; color: #616161; text-align: center; }
.tools { flex: 1; display: flex; }
.tool { display: flex; flex-direction: column; align-items: center; text-align: center; padding-top: 6px; }
.tool svg { width: 48px; height: 48px; margin-bottom: 13px; }
.file { width: 412px; padding-left: 1px; } .share { width: 203px; padding-left: 6px; } .run { width: 290px; padding-left: 6px; }
.share h2 { padding-right: 9px; } .run h2 { padding-right: 6px; }
.new, .open { width: 80px; } .save { width: 87px; } .compare { width: 154px; letter-spacing: -.2px; }
.details { width: 97px; } .sharing { width: 95px; }
.go { width: 116px; } .step { width: 87px; } .stop { width: 74px; }
.off span { color: #ababab; }
.arrow { margin: 12px 0 0 3px; border: 8px solid transparent; border-top: 9px solid #757575; border-bottom: 0; }
.arrow.dark { border-top-color: #555; margin-top: 10px; }
.collapse { width: 22px; height: 20px; margin: 156px 13px 0 auto; }

/* docked panels */
.dock { flex: 1; min-height: 0; display: flex; font-family: "Liberation Sans", Arial, sans-serif; }
.library { width: 602px; background: #fff; border-right: 2px solid #7d7d7d; display: flex; flex-direction: column; }
.center { flex: 1; display: flex; flex-direction: column; background: #bfbfbf; }
.browser { width: 602px; background: #f5f5f5; border-left: 2px solid #7d7d7d; display: flex; flex-direction: column; }
.panelhead { height: 46px; flex: none; display: flex; justify-content: space-between; background: #fff; border-bottom: 2px solid #bfbfbf; padding: 0 33px 0 12px; }
.panelhead h3 { font-size: 26px; line-height: 48px; }
.kebab { width: 6px; height: 20px; margin-top: 12px; fill: #5a5a5a; }
.input { height: 44px; border: 2px solid #7d7d7d; background: #fff; color: #616161; font-size: 24px; line-height: 42px; display: flex; justify-content: space-between; }
.loupe { width: 26px; height: 26px; margin-top: 7px; }
.foot { height: 45px; flex: none; margin-top: auto; background: #e5e5e5; border-top: 2px solid #bfbfbf; padding: 10px 12px 0 14px; }
.foot svg { width: 18px; height: 24px; }
.browser .foot { padding-left: 570px; }

/* component library */
.libsearch { height: 59px; flex: none; display: flex; padding: 7px 0 0 3px; }
.libsearch .input { width: 480px; padding: 0 15px 0 10px; }
.listbtn { width: 24px; height: 26px; margin: 12px 14px 0 20px; }
.gridbtn { width: 44px; height: 46px; margin-top: -1px; border: 2px solid #7d7d7d; border-radius: 7px; background: #d9d9d9; padding: 8px 7px; }
.gridbtn svg { width: 26px; height: 26px; }
.cat { height: 47px; flex: none; font-weight: 700; font-size: 22px; line-height: 46px; padding-left: 12px; background: #e5e5e5; border: solid #bfbfbf; border-width: 2px 0; }
.grid { display: grid; grid-template-columns: repeat(3, 178px); grid-auto-rows: 178px; padding: 31px 0 0 6px; height: 1445px; flex: none; font-family: Inter, sans-serif; }
.comp { text-align: center; }
.comp svg { width: 48px; height: 48px; margin: 0 auto 1px; overflow: visible; }
.grid.cut { height: 86px; overflow: hidden; border-bottom: 2px solid #f6f6f6; }
.bx { fill: #fff; stroke: #8a8a8a; stroke-width: 2; }
.sh { fill: #f4f4f4; } .sh2 { fill: #e4e4e4; }
.pix { font-family: "DejaVu Sans", sans-serif; font-weight: 700; fill: #3a3a3a; text-anchor: middle; }
.lt { font-weight: 400; stroke: #444; stroke-width: .6; }
.md { font-weight: 400; stroke: #3a3a3a; stroke-width: 1.1; }

/* document area */
.doctabs { height: 46px; flex: none; display: flex; background: #fff; font-size: 24px; line-height: 52px; }
.grip { width: 18px; padding: 14px 0 0 10px; border-bottom: 2px solid #bfbfbf; }
.grip svg { width: 8px; height: 16px; }
.doctab { width: 184px; display: flex; justify-content: space-between; padding: 0 12px 0 16px; border: solid #bfbfbf; border-width: 0 2px; box-shadow: inset 0 6px #124a86; }
.doctab svg { width: 16px; height: 16px; margin-top: 19px; }
.rest { flex: 1; display: flex; justify-content: space-between; padding: 0 39px 0 20px; border-bottom: 2px solid #bfbfbf; }
.plus { width: 20px; height: 20px; margin-top: 12px; }
.viewbar { height: 78px; flex: none; display: flex; justify-content: space-between; background: #f5f5f5; border-bottom: 6px solid #124a86; padding: 10px 40px 0 40px; font-size: 26px; line-height: 53px; }
.toggle { width: 346px; height: 52px; display: grid; grid-template-columns: 164px 1fr; border: 2px solid #bfbfbf; border-radius: 5px; padding: 4px; font-size: 22px; line-height: 42px; text-align: center; color: #616161; }
.toggle b { font-weight: 400; height: 40px; }
.toggle b:first-child { background: #d9d9d9; color: #212121; }
.stage { flex: 1; display: flex; flex-direction: column; padding: 90px 0 49px 107px; box-shadow: inset 0 -2px #d0d0d0; }
.figure { width: 1280px; height: 960px; background: #f0f0f0; display: flex; align-items: flex-end; justify-content: flex-end; padding: 3px; }
.figure svg { width: 27px; height: 27px; }
.zoombtn { width: 60px; height: 60px; margin: auto 50px 0 auto; background: #fff; border-radius: 9px; box-shadow: 0 3px 8px rgba(0, 0, 0, .35); padding: 15px 12px 0 14px; }
.zoombtn svg { width: 34px; height: 34px; }

/* component browser */
.bsearch { height: 60px; flex: none; display: flex; border-bottom: 2px solid #7d7d7d; padding: 8px 0 0 12px; font-size: 22px; line-height: 43px; }
.bsearch .input { width: 436px; padding: 0 8px 0 9px; line-height: 40px; }
.bsearch span { width: 65px; padding-left: 9px; }
.viewbtn { width: 77px; height: 44px; margin-left: 1px; border: 2px solid #7d7d7d; border-radius: 10px; display: flex; align-items: center; gap: 12px; padding-left: 4px; }
.stack { width: 32px; height: 26px; margin-top: 2px; }
.tri { border: 8px solid transparent; border-top: 9px solid #666; border-bottom: 0; flex: none; }
.tree { height: 138px; flex: none; border-bottom: 2px solid #7d7d7d; font: 24px/44px Inter, sans-serif; }
.node { display: flex; align-items: center; height: 46px; }
.node.on { height: 51px; background: #bfbfbf; padding: 8px 0 0 10px; }
.node.on svg { width: 28px; height: 32px; margin: -6px 12px 0 12px; }
.node.kid { padding-left: 72px; height: 44px; letter-spacing: -.1px; }
.ptabs { height: 62px; flex: none; display: flex; align-items: center; padding: 2px 0 0 10px; font-size: 24px; }
.ptabs span { color: #616161; border-left: 2px solid #7d7d7d; margin-left: 20px; padding-left: 20px; line-height: 30px; }
.psearch { height: 52px; flex: none; display: flex; gap: 12px; padding-left: 14px; }
.psearch .input { width: 452px; padding: 0 10px 0 9px; line-height: 40px; margin-right: 4px; }
.psearch .input svg { width: 22px; height: 22px; margin-top: 8px; }
.sq { width: 44px; height: 44px; border: 2px solid #7d7d7d; border-radius: 10px; padding: 7px 8px; }
.sq svg { width: 24px; height: 26px; }
.sq.on { background: #d9d9d9; }
.sq.sort { display: flex; gap: 4px; padding: 4px 0 0 7px; }
.sq.sort svg { width: 10px; height: 20px; margin-top: 5px; }
.az { width: 12px; display: flex; flex-direction: column; font: bold 14px/16px "Liberation Sans", sans-serif; color: #555; }
h5 { height: 48px; flex: none; background: #e5e5e5; font-size: 20px; line-height: 49px; display: flex; align-items: center; gap: 7px; padding-left: 19px; }
h5 .tri { border-top-color: #111; }
.props { display: flex; justify-content: space-between; padding: 10px 10px 10px 20px; font-size: 22px; }
dl { display: grid; grid-template-columns: 270px 270px; row-gap: 6px; }
dt { line-height: 44px; height: 44px; }
dd { height: 44px; border: 2px solid #7d7d7d; background: #fff; padding-left: 9px; line-height: 42px; }
dd.check { width: 28px; height: 28px; margin-top: 6px; border-color: #666; }
.more { width: 24px; border: 2px solid #7d7d7d; border-radius: 6px; display: flex; flex-direction: column; align-items: center; justify-content: center; gap: 8px; }
.more i { width: 4px; height: 4px; background: #1c1c1c; }
```
